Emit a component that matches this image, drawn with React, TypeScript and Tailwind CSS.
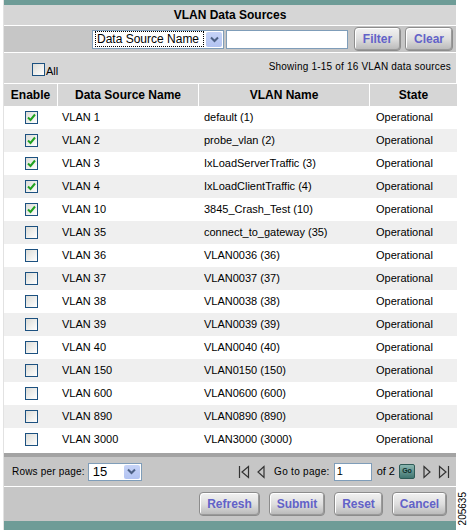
import React from 'react';

const rows = [
  { on: true, name: 'VLAN 1', vlan: 'default (1)' },
  { on: true, name: 'VLAN 2', vlan: 'probe_vlan (2)' },
  { on: true, name: 'VLAN 3', vlan: 'IxLoadServerTraffic (3)' },
  { on: true, name: 'VLAN 4', vlan: 'IxLoadClientTraffic (4)' },
  { on: true, name: 'VLAN 10', vlan: '3845_Crash_Test (10)' },
  { on: false, name: 'VLAN 35', vlan: 'connect_to_gateway (35)' },
  { on: false, name: 'VLAN 36', vlan: 'VLAN0036 (36)' },
  { on: false, name: 'VLAN 37', vlan: 'VLAN0037 (37)' },
  { on: false, name: 'VLAN 38', vlan: 'VLAN0038 (38)' },
  { on: false, name: 'VLAN 39', vlan: 'VLAN0039 (39)' },
  { on: false, name: 'VLAN 40', vlan: 'VLAN0040 (40)' },
  { on: false, name: 'VLAN 150', vlan: 'VLAN0150 (150)' },
  { on: false, name: 'VLAN 600', vlan: 'VLAN0600 (600)' },
  { on: false, name: 'VLAN 890', vlan: 'VLAN0890 (890)' },
  { on: false, name: 'VLAN 3000', vlan: 'VLAN3000 (3000)' },
];

const Check = ({ on }: { on: boolean }) => (
  <span className="inline-flex h-[13px] w-[13px] items-center justify-center border border-[#1c5180] bg-gradient-to-br from-[#dcdcd7] to-white">
    {on && (
      <svg width="9" height="9" viewBox="0 0 9 9">
        <path d="M1 4.5 L3.5 7 L8 1.5" fill="none" stroke="#21a121" strokeWidth="2" />
      </svg>
    )}
  </span>
);

const Btn = ({ label, w }: { label: string; w: string }) => (
  <button
    className={`${w} h-[24px] rounded-[4px] border border-[#8c8c8c] bg-gradient-to-b from-[#f2f2f2] via-[#dedede] to-[#b8b8b8] text-[12px] font-bold text-[#6262c8] shadow-[inset_-1px_-1px_0_#9a9a9a,inset_1px_1px_0_#ffffff]`}
  >
    {label}
  </button>
);

const DropArrow = () => (
  <span className="flex h-full w-[16px] items-center justify-center rounded-[2px] bg-gradient-to-b from-[#c6d3f7] to-[#b2c3f2]">
    <svg width="9" height="7" viewBox="0 0 9 7">
      <path d="M1 1.5 L4.5 5 L8 1.5" fill="none" stroke="#4d6185" strokeWidth="2" />
    </svg>
  </span>
);

export default function App() {
  return (
    <div className="flex h-[530px] w-[469px] bg-white font-['Liberation_Sans',Arial,sans-serif] text-[11px] text-black">
      <div className="ml-[3px] flex w-[453px] flex-col border-l border-[#e2e2e2]">
        <div className="h-[5px] bg-[#6e9c97]" />
        {/* title */}
        <div className="flex h-[21px] items-center justify-center border-b border-white bg-[#d6d6d6] text-[12px] font-bold">
          VLAN Data Sources
        </div>
        {/* filter */}
        <div className="flex h-[26px] items-center bg-[#c6c6c6] pl-[88px]">
          <div className="flex h-[19px] w-[132px] items-center border border-[#7f9db9] bg-white pl-[2px] pr-[1px] py-[1px]">
            <span className="flex-1 border border-dotted border-black pl-[1px] text-[12px] leading-[14px]">Data Source Name</span>
            <span className="ml-[2px] h-full"><DropArrow /></span>
          </div>
          <div className="ml-[2px] h-[19px] w-[122px] border border-[#7f9db9] bg-white" />
          <div className="ml-[6px] flex gap-[4px]">
            <Btn label="Filter" w="w-[47px]" />
            <Btn label="Clear" w="w-[48px]" />
          </div>
        </div>
        {/* toolbar */}
        <div className="flex h-[31px] items-center justify-between border-t border-white bg-[#d6d6d6] pl-[28px] pr-[5px]">
          <span className="flex items-end">
            <Check on={false} />
            <span className="ml-[1px] translate-y-[3px]">All</span>
          </span>
          <span className="-translate-y-[2px] text-[10px] tracking-[0.2px]">Showing 1-15 of 16 VLAN data sources</span>
        </div>
        {/* table */}
        <div className="grid grid-cols-[54px_141px_171px_87px] border-t border-white">
          {['Enable', 'Data Source Name', 'VLAN Name', 'State'].map((h, i) => (
            <div
              key={h}
              className={`flex h-[22px] items-center justify-center bg-[#d6d6d6] text-[12px] font-bold ${i < 3 ? 'border-r border-white' : ''}`}
            >
              {h}
            </div>
          ))}
          {rows.map((r, i) => {
            const bg = i % 2 === 0 ? 'bg-white' : 'bg-[#efefef]';
            return (
              <React.Fragment key={r.name}>
                <div className={`flex h-[23px] items-center justify-center ${bg}`}>
                  <Check on={r.on} />
                </div>
                <div className={`flex h-[23px] items-center pl-[4px] ${bg}`}>{r.name}</div>
                <div className={`flex h-[23px] items-center pl-[5px] ${bg}`}>{r.vlan}</div>
                <div className={`flex h-[23px] items-center pl-[6px] ${bg}`}>Operational</div>
              </React.Fragment>
            );
          })}
        </div>
        <div className="mt-[2px] h-[4px] bg-[#a3a3a3]" />
        {/* pager */}
        <div className="flex h-[29px] items-center bg-[#c6c6c6] pl-[8px] pr-[6px] text-[10px]">
          <span className="tracking-[0.2px]">Rows per page:</span>
          <div className="ml-[3px] flex h-[18px] w-[54px] items-center border border-[#7f9db9] bg-white py-[1px] pl-[4px] pr-[1px]">
            <span className="flex-1 text-[13px] leading-[14px]">15</span>
            <span className="h-full"><DropArrow /></span>
          </div>
          <div className="ml-auto flex items-center">
            <svg width="12" height="14" viewBox="0 0 12 14">
              <path d="M1.5 1 V13 M10.5 1.5 L4 7 L10.5 12.5 Z" fill="none" stroke="#333" strokeWidth="1.2" />
            </svg>
            <svg className="ml-[7px]" width="8" height="14" viewBox="0 0 8 14">
              <path d="M7 1.5 L1 7 L7 12.5 Z" fill="none" stroke="#333" strokeWidth="1.2" />
            </svg>
            <span className="ml-[9px] tracking-[0.3px]">Go to page:</span>
            <div className="ml-[4px] flex h-[18px] w-[38px] items-center border border-[#7f9db9] bg-white pl-[2px] text-[11px]">1</div>
            <span className="ml-[5px] text-[11px]">of 2</span>
            <span className="ml-[4px] flex h-[15px] w-[16px] items-center justify-center rounded-[2px] border border-[#2e5b57] bg-gradient-to-b from-[#8bb7b1] to-[#3f7570] text-[7px] font-bold text-[#0c2e2b]">
              Go
            </span>
            <svg className="ml-[8px]" width="8" height="14" viewBox="0 0 8 14">
              <path d="M1 1.5 L7 7 L1 12.5 Z" fill="none" stroke="#333" strokeWidth="1.2" />
            </svg>
            <svg className="ml-[7px]" width="12" height="14" viewBox="0 0 12 14">
              <path d="M10.5 1 V13 M1.5 1.5 L8 7 L1.5 12.5 Z" fill="none" stroke="#333" strokeWidth="1.2" />
            </svg>
          </div>
        </div>
        {/* buttons */}
        <div className="flex h-[35px] items-center justify-end gap-[9px] border-t border-white bg-[#c6c6c6] pr-[9px]">
          <Btn label="Refresh" w="w-[61px]" />
          <Btn label="Submit" w="w-[56px]" />
          <Btn label="Reset" w="w-[49px]" />
          <Btn label="Cancel" w="w-[55px]" />
        </div>
        <div className="flex-1 bg-[#6e9c97]" />
      </div>
      <div className="flex flex-1 flex-col justify-end pb-[5px]">
        <span className="ml-[1px] [writing-mode:vertical-rl] rotate-180 text-[10px] leading-[11px]">205635</span>
      </div>
    </div>
  );
}
